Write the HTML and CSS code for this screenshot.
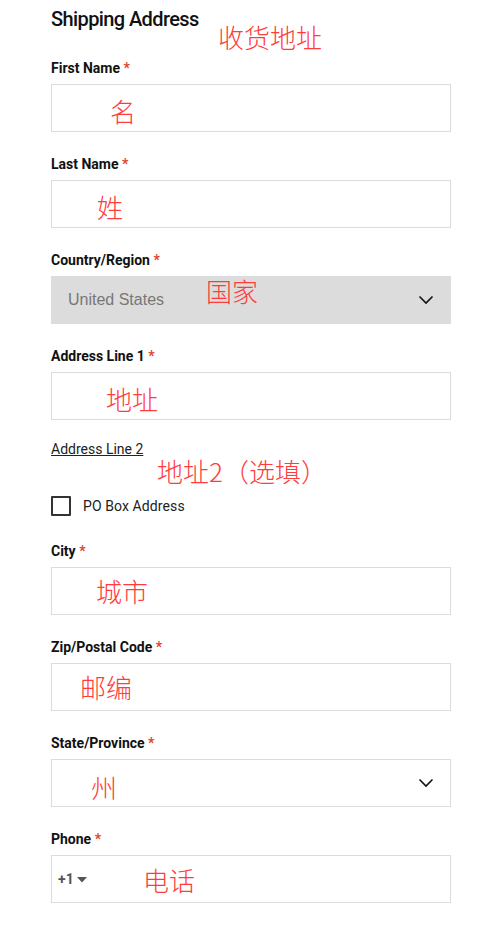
FILE: index.html
```html
<!DOCTYPE html>
<html lang="en">
<head>
<meta charset="utf-8">
<title>Shipping Address</title>
<link rel="stylesheet" href="styles.css">
</head>
<body>
<main class="form">
  <div class="heading-wrap">
    <h2 class="heading">Shipping Address</h2>
    <span class="note note-title">收货地址</span>
  </div>

  <div class="field">
    <label class="label">First Name <span class="req">*</span></label>
    <div class="box">
      <span class="note note-first">名</span>
    </div>
  </div>

  <div class="field">
    <label class="label">Last Name <span class="req">*</span></label>
    <div class="box">
      <span class="note note-last">姓</span>
    </div>
  </div>

  <div class="field">
    <label class="label">Country/Region <span class="req">*</span></label>
    <div class="box select grey">
      <span class="select-value">United States</span>
      <svg class="chev" width="16" height="10" viewBox="0 0 16 10"><path d="M1.5 1.5 L8 8 L14.5 1.5" fill="none" stroke="#111" stroke-width="1.6"/></svg>
      <span class="note note-country">国家</span>
    </div>
  </div>

  <div class="field">
    <label class="label">Address Line 1 <span class="req">*</span></label>
    <div class="box">
      <span class="note note-addr">地址</span>
    </div>
  </div>

  <div class="addr2">
    <a class="link">Address Line 2</a>
    <span class="note note-addr2">地址2（选填）</span>
  </div>

  <label class="check">
    <span class="checkbox"></span>
    <span class="check-text">PO Box Address</span>
  </label>

  <div class="field">
    <label class="label">City <span class="req">*</span></label>
    <div class="box">
      <span class="note note-city">城市</span>
    </div>
  </div>

  <div class="field">
    <label class="label">Zip/Postal Code <span class="req">*</span></label>
    <div class="box">
      <span class="note note-zip">邮编</span>
    </div>
  </div>

  <div class="field">
    <label class="label">State/Province <span class="req">*</span></label>
    <div class="box select">
      <svg class="chev" width="16" height="10" viewBox="0 0 16 10"><path d="M1.5 1.5 L8 8 L14.5 1.5" fill="none" stroke="#111" stroke-width="1.6"/></svg>
      <span class="note note-state">州</span>
    </div>
  </div>

  <div class="field">
    <label class="label">Phone <span class="req">*</span></label>
    <div class="box phone">
      <span class="code">+1</span>
      <svg class="caret" width="10" height="6" viewBox="0 0 10 6"><path d="M0 0 H10 L5 5.5 Z" fill="#555"/></svg>
      <span class="note note-phone">电话</span>
    </div>
  </div>
</main>
</body>
</html>
```

FILE: styles.css
```css
* { box-sizing: border-box; }
html, body { margin: 0; padding: 0; background: #fff; }
body {
  font-family: Roboto, "Liberation Sans", Arial, sans-serif;
  color: #111;
}
.form {
  width: 400px;
  margin-left: 51px;
  padding-top: 7px;
  display: flex;
  flex-direction: column;
}
.heading-wrap { position: relative; }
.heading {
  margin: 0;
  font-size: 20px;
  line-height: 24px;
  font-weight: 500;
  letter-spacing: -0.6px;
  color: #111;
}
.field {
  display: flex;
  flex-direction: column;
  gap: 8px;
  margin-top: 24px;
}
.heading-wrap + .field { margin-top: 29px; }
.label {
  font-size: 14px;
  line-height: 16px;
  font-weight: 700;
  color: #111;
}
.req { color: #e0442c; }
.box {
  position: relative;
  height: 48px;
  border: 1px solid #dcdcdc;
  background: #fff;
  display: flex;
  align-items: center;
}
.select { justify-content: space-between; padding: 0 16px 0 16px; }
.select .chev { margin-left: auto; }
.grey { background: #dcdcdc; border-color: #dcdcdc; }
.select-value {
  font-family: "Liberation Sans", Arial, sans-serif;
  font-size: 16px;
  color: #777;
}
.phone { padding-left: 6px; gap: 3px; }
.code { font-size: 14px; font-weight: 700; color: #555; }
.caret { margin-top: 1px; }

.addr2 { position: relative; margin-top: 19px; height: 16px; }
.link {
  font-size: 14px;
  line-height: 16px;
  color: #222;
  text-decoration: underline;
}
.check {
  margin-top: 41px;
  display: flex;
  align-items: center;
  gap: 12px;
  height: 20px;
}
.checkbox {
  width: 20px;
  height: 20px;
  border: 2px solid #333;
  border-radius: 1px;
}
.check-text { font-size: 14px; color: #222; letter-spacing: 0.1px; }
.check + .field { margin-top: 27px; }

.note {
  position: absolute;
  font-family: "Noto Sans CJK SC", sans-serif;
  font-weight: 300;
  font-size: 26px;
  line-height: 26px;
  color: #ff3b3b;
  white-space: nowrap;
}
.note-title { left: 167px; top: 17px; }
.note-first { left: 58px; top: 13px; }
.note-last { left: 45px; top: 13px; }
.note-country { left: 154px; top: 1px; }
.note-addr { left: 54px; top: 13px; }
.note-addr2 { left: 106px; top: 19px; }
.note-city { left: 44px; top: 10px; }
.note-zip { left: 28px; top: 10px; }
.note-state { left: 39px; top: 14px; }
.note-phone { left: 91px; top: 11px; }
```
